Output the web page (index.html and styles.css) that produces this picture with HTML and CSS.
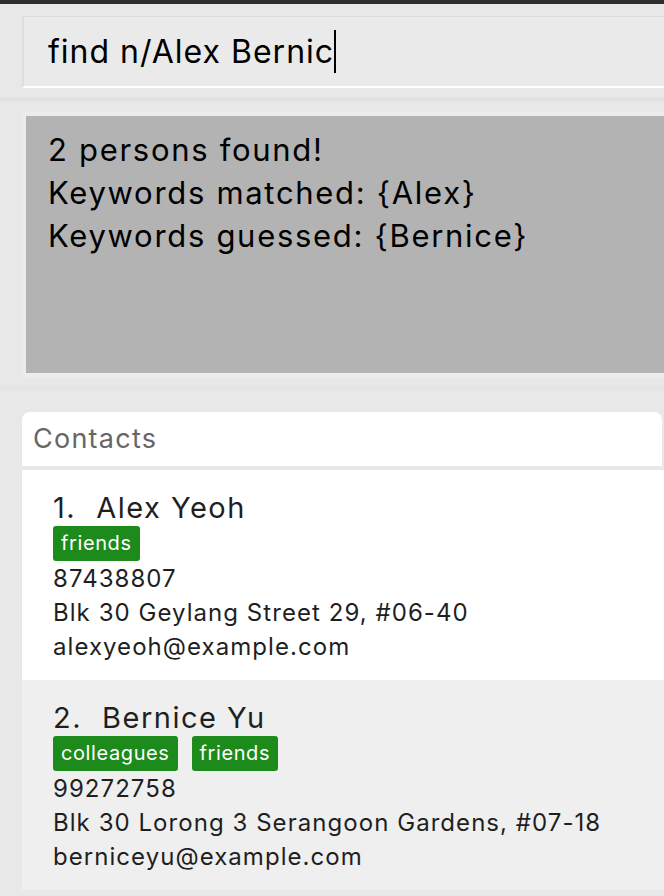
FILE: index.html
```html
<!DOCTYPE html>
<html>
<head>
<meta charset="utf-8">
<link rel="stylesheet" href="styles.css">
</head>
<body>
<div class="app">
  <div class="topbar"></div>
  <div class="command-pane">
    <div class="command-box"><span class="command-text">find n/Alex Bernic</span><span class="caret"></span></div>
  </div>
  <div class="result-pane">
    <div class="result-frame">
      <div class="result-box">
        <div>2 persons found!</div>
        <div>Keywords matched: {Alex}</div>
        <div>Keywords guessed: {Bernice}</div>
      </div>
    </div>
  </div>
  <div class="list-pane">
    <div class="list-card">
      <div class="list-header">Contacts</div>
      <div class="person odd">
        <div class="name"><span class="idx">1.</span><span>Alex Yeoh</span></div>
        <div class="tags"><span class="tag">friends</span></div>
        <div class="field">87438807</div>
        <div class="field">Blk 30 Geylang Street 29, #06-40</div>
        <div class="field">alexyeoh@example.com</div>
      </div>
      <div class="person even">
        <div class="name"><span class="idx">2.</span><span>Bernice Yu</span></div>
        <div class="tags"><span class="tag">colleagues</span><span class="tag">friends</span></div>
        <div class="field">99272758</div>
        <div class="field">Blk 30 Lorong 3 Serangoon Gardens, #07-18</div>
        <div class="field">berniceyu@example.com</div>
      </div>
    </div>
  </div>
</div>
</body>
</html>
```
FILE: styles.css
```css
html, body {
  margin: 0;
  padding: 0;
}
body {
  background: #e8e8e8;
  font-family: Inter, "Noto Sans", sans-serif;
  width: 664px;
  height: 896px;
  overflow: hidden;
}
.app {
  display: flex;
  flex-direction: column;
}
.topbar {
  height: 4px;
  background: #2e2e2e;
}
.command-pane {
  padding: 12px 0 0 22px;
}
.command-box {
  display: flex;
  align-items: center;
  height: 69px;
  background: #eaeaea;
  border-top: 1px solid #dcdcdc;
  border-left: 2px solid #dedede;
  border-bottom: 2px solid #ffffff;
  padding-left: 24px;
  font-size: 32px;
  letter-spacing: 1px;
  color: #000;
}
.caret {
  display: inline-block;
  width: 0;
  height: 43px;
  border-left: 2px solid #000;
  margin-left: 0;
}
.result-pane {
  margin-top: 9px;
  border-top: 4px solid #e2e2e2;
  padding: 11px 0 9px 22px;
  border-bottom: 4px solid #e4e4e4;
}
.result-frame {
  border: 4px solid #ececec;
  border-right: none;
}
.result-box {
  background: #b3b3b3;
  height: 257px;
  box-sizing: border-box;
  padding: 12px 22px;
  font-size: 31px;
  letter-spacing: 1.7px;
  line-height: 43px;
  color: #000;
}
.list-pane {
  padding: 22px 0 0 22px;
}
.list-card {
  background: #e8e8e8;
  margin-right: 2px;
}
.list-header {
  background: #fff;
  border-radius: 8px 8px 0 0;
  height: 54px;
  line-height: 54px;
  padding-left: 11px;
  font-size: 27px;
  letter-spacing: 1.25px;
  color: #666;
  border-bottom: 4px solid #e8e8e8;
}
.person {
  height: 210px;
  box-sizing: border-box;
  padding: 20px 0 0 31px;
  color: #1f1f1f;
  margin-right: -2px;
}
.person.odd { background: #ffffff; }
.person.even { background: #efefef; }
.name {
  font-size: 29px;
  line-height: 36px;
  letter-spacing: 1.5px;
  display: flex;
}
.idx {
  margin-right: 20px;
}
.tags {
  display: flex;
  gap: 14px;
  height: 35px;
  margin-bottom: 1px;
}
.tag {
  background: #1c8b1c;
  color: #fff;
  font-size: 20px;
  letter-spacing: 0.6px;
  line-height: 35px;
  padding: 0 8px;
  border-radius: 3px;
}
.field {
  font-size: 24px;
  letter-spacing: 1.05px;
  line-height: 34px;
}
```
